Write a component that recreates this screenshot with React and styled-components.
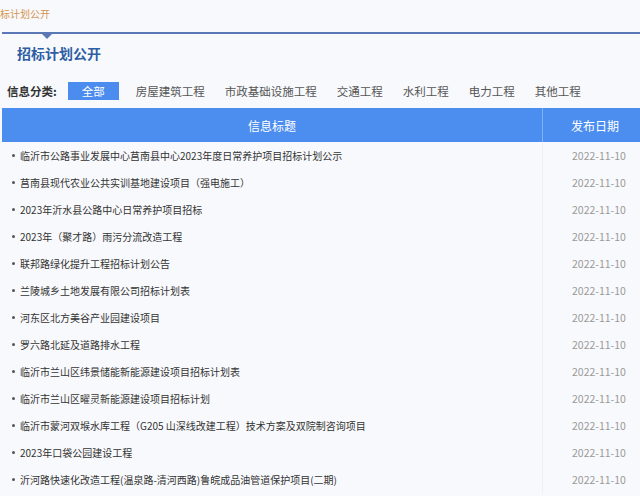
import React from "react";
import styled, { createGlobalStyle } from "styled-components";

const GlobalStyle = createGlobalStyle`
  html, body {
    margin: 0;
    padding: 0;
    background: #f8f9fc;
    font-family: "Noto Sans CJK SC", "Noto Sans", sans-serif;
  }
`;

const categories = ["全部", "房屋建筑工程", "市政基础设施工程", "交通工程", "水利工程", "电力工程", "其他工程"];

const rows = [
  "临沂市公路事业发展中心莒南县中心2023年度日常养护项目招标计划公示",
  "莒南县现代农业公共实训基地建设项目（强电施工）",
  "2023年沂水县公路中心日常养护项目招标",
  "2023年（聚才路）雨污分流改造工程",
  "联邦路绿化提升工程招标计划公告",
  "兰陵城乡土地发展有限公司招标计划表",
  "河东区北方美谷产业园建设项目",
  "罗六路北延及道路排水工程",
  "临沂市兰山区纬景储能新能源建设项目招标计划表",
  "临沂市兰山区曜灵新能源建设项目招标计划",
  "临沂市蒙河双堠水库工程（G205 山深线改建工程）技术方案及双院制咨询项目",
  "2023年口袋公园建设工程",
  "沂河路快速化改造工程(温泉路-清河西路)鲁皖成品油管道保护项目(二期)",
];

function App() {
  return (
    <Page>
      <GlobalStyle />
      <Crumb>标计划公开</Crumb>
      <Rule />
      <Title>招标计划公开</Title>
      <FilterBar>
        <FilterLabel>信息分类:</FilterLabel>
        {categories.map((c, i) => (
          <FilterItem key={c} $active={i === 0}>{c}</FilterItem>
        ))}
      </FilterBar>
      <Table>
        <HeadRow>
          <HeadCell>信息标题</HeadCell>
          <HeadDate>发布日期</HeadDate>
        </HeadRow>
        {rows.map((r) => (
          <Row key={r}>
            <TitleCell>
              <Bullet />
              {r}
            </TitleCell>
            <DateCell>2022-11-10</DateCell>
          </Row>
        ))}
      </Table>
    </Page>
  );
}

const Page = styled.div`
  width: 640px;
  height: 496px;
  overflow: hidden;
`;

const Crumb = styled.div`
  height: 28px;
  line-height: 28px;
  font-size: 10px;
  color: #d49550;
  white-space: nowrap;
`;

const Rule = styled.div`
  position: relative;
  margin: 4px 0 0 2px;
  height: 2px;
  background: #5b78b6;
  &::after {
    content: "";
    position: absolute;
    left: 40px;
    top: 2px;
    border-left: 5px solid transparent;
    border-right: 5px solid transparent;
    border-top: 5px solid #5b78b6;
  }
`;

const Title = styled.h2`
  margin: 0;
  padding-left: 17px;
  height: 40px;
  line-height: 38px;
  font-size: 14px;
  font-weight: 700;
  color: #2e5ea4;
`;

const FilterBar = styled.div`
  display: flex;
  align-items: center;
  height: 34px;
  padding-left: 7px;
`;

const FilterLabel = styled.span`
  font-size: 11.5px;
  font-weight: 700;
  color: #333;
  margin-right: 11px;
`;

const FilterItem = styled.span`
  font-size: 11.5px;
  color: ${(p) => (p.$active ? "#fff" : "#555")};
  background: ${(p) => (p.$active ? "#4b8cee" : "transparent")};
  height: 18px;
  line-height: 18px;
  padding: ${(p) => (p.$active ? "0 14px" : "0")};
  margin-right: ${(p) => (p.$active ? "17px" : "20px")};
`;

const Table = styled.div`
  display: flex;
  flex-direction: column;
`;

const HeadRow = styled.div`
  display: grid;
  grid-template-columns: 541px 1fr;
  height: 34px;
  margin-left: 2px;
  background: #4c8df0;
  color: #fff;
  font-size: 12px;
`;

const HeadCell = styled.div`
  display: flex;
  align-items: center;
  justify-content: center;
  border-right: 1px solid #82b0f5;
`;

const HeadDate = styled.div`
  display: flex;
  align-items: center;
  padding-left: 28px;
`;

const Row = styled.div`
  display: grid;
  grid-template-columns: 543px 1fr;
  height: 27px;
  font-size: 10px;
`;

const TitleCell = styled.div`
  display: flex;
  align-items: center;
  padding-left: 12px;
  color: #333;
  white-space: nowrap;
  border-right: 1px solid #eef0f4;
`;

const Bullet = styled.span`
  width: 3px;
  height: 3px;
  border-radius: 50%;
  background: #555;
  margin-right: 5px;
  flex-shrink: 0;
`;

const DateCell = styled.div`
  display: flex;
  align-items: center;
  padding-left: 29px;
  color: #999;
  font-size: 10.5px;
`;

export default App;
